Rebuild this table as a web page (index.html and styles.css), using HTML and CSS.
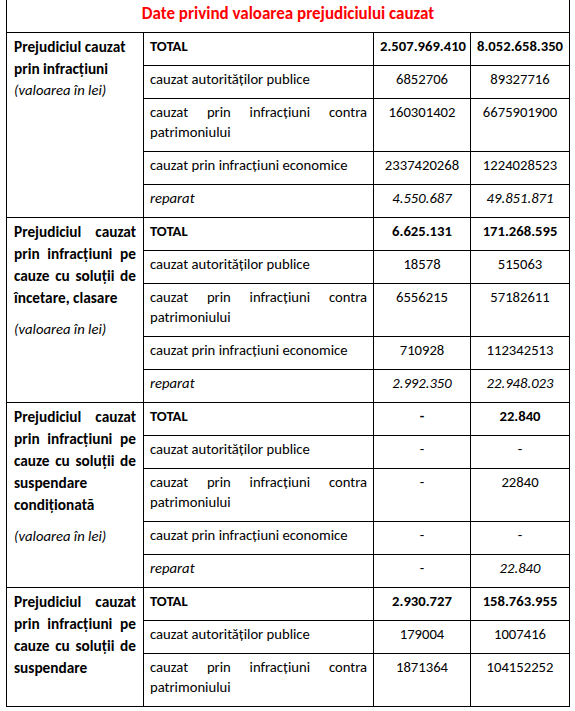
FILE: index.html
```html
<!DOCTYPE html>
<html lang="ro">
<head>
<meta charset="utf-8">
<title>Date privind valoarea prejudiciului cauzat</title>
<link rel="stylesheet" href="styles.css">
</head>
<body>
<table class="tbl">
  <colgroup>
    <col class="c1"><col class="c2"><col class="c3"><col class="c4">
  </colgroup>
  <tr class="title-row">
    <td colspan="4" class="title">Date privind valoarea prejudiciului cauzat</td>
  </tr>

  <tr>
    <td rowspan="5" class="head"><span class="ln">Prejudiciul cauzat</span><span class="ln">prin infracțiuni</span><span class="ln note">(valoarea în lei)</span></td>
    <td class="b">TOTAL</td>
    <td class="num b">2.507.969.410</td>
    <td class="num b">8.052.658.350</td>
  </tr>
  <tr>
    <td>cauzat autorităților publice</td>
    <td class="num">6852706</td>
    <td class="num">89327716</td>
  </tr>
  <tr>
    <td><span class="ln j">cauzat prin infracțiuni contra</span><span class="ln">patrimoniului</span></td>
    <td class="num">160301402</td>
    <td class="num">6675901900</td>
  </tr>
  <tr>
    <td>cauzat prin infracțiuni economice</td>
    <td class="num">2337420268</td>
    <td class="num">1224028523</td>
  </tr>
  <tr>
    <td class="i">reparat</td>
    <td class="num i">4.550.687</td>
    <td class="num i">49.851.871</td>
  </tr>

  <tr>
    <td rowspan="5" class="head"><span class="ln j">Prejudiciul cauzat</span><span class="ln j">prin infracțiuni pe</span><span class="ln j">cauze cu soluţii de</span><span class="ln">încetare, clasare</span><span class="ln note gap">(valoarea în lei)</span></td>
    <td class="b">TOTAL</td>
    <td class="num b">6.625.131</td>
    <td class="num b">171.268.595</td>
  </tr>
  <tr>
    <td>cauzat autorităților publice</td>
    <td class="num">18578</td>
    <td class="num">515063</td>
  </tr>
  <tr>
    <td><span class="ln j">cauzat prin infracțiuni contra</span><span class="ln">patrimoniului</span></td>
    <td class="num">6556215</td>
    <td class="num">57182611</td>
  </tr>
  <tr>
    <td>cauzat prin infracțiuni economice</td>
    <td class="num">710928</td>
    <td class="num">112342513</td>
  </tr>
  <tr>
    <td class="i">reparat</td>
    <td class="num i">2.992.350</td>
    <td class="num i">22.948.023</td>
  </tr>

  <tr>
    <td rowspan="5" class="head"><span class="ln j">Prejudiciul  cauzat</span><span class="ln j">prin infracțiuni pe</span><span class="ln j">cauze cu soluţii de</span><span class="ln">suspendare</span><span class="ln">condiţionată</span><span class="ln note gap">(valoarea în lei)</span></td>
    <td class="b">TOTAL</td>
    <td class="num b">-</td>
    <td class="num b">22.840</td>
  </tr>
  <tr>
    <td>cauzat autorităților publice</td>
    <td class="num">-</td>
    <td class="num">-</td>
  </tr>
  <tr>
    <td><span class="ln j">cauzat prin infracțiuni contra</span><span class="ln">patrimoniului</span></td>
    <td class="num">-</td>
    <td class="num">22840</td>
  </tr>
  <tr>
    <td>cauzat prin infracțiuni economice</td>
    <td class="num">-</td>
    <td class="num">-</td>
  </tr>
  <tr>
    <td class="i">reparat</td>
    <td class="num">-</td>
    <td class="num i">22.840</td>
  </tr>

  <tr>
    <td rowspan="3" class="head"><span class="ln j">Prejudiciul cauzat</span><span class="ln j">prin infracțiuni pe</span><span class="ln j">cauze cu soluţii de</span><span class="ln">suspendare</span></td>
    <td class="b">TOTAL</td>
    <td class="num b">2.930.727</td>
    <td class="num b">158.763.955</td>
  </tr>
  <tr>
    <td>cauzat autorităților publice</td>
    <td class="num">179004</td>
    <td class="num">1007416</td>
  </tr>
  <tr>
    <td><span class="ln j">cauzat prin infracțiuni contra</span><span class="ln">patrimoniului</span></td>
    <td class="num">1871364</td>
    <td class="num">104152252</td>
  </tr>
</table>
</body>
</html>
```

FILE: styles.css
```css
html, body {
  margin: 0;
  padding: 0;
  background: #ffffff;
}

body {
  font-family: Carlito, Lato, "Liberation Sans", sans-serif;
  color: #000000;
}

.tbl {
  border-collapse: collapse;
  table-layout: fixed;
  width: 563px;
  margin-left: 6px;
}

.c1 { width: 137px; }
.c2 { width: 230px; }
.c3 { width: 97px; }
.c4 { width: 99px; }

.tbl td {
  border: 1px solid #000000;
  vertical-align: top;
  padding: 3px 6px 9px 6px;
  font-size: 14.67px;
  line-height: 20px;
  text-align: left;
}

.tbl .title {
  border-top: none;
  color: #ff0000;
  font-weight: bold;
  font-size: 17px;
  text-align: center;
  padding: 3px 6px 8px;
  line-height: 21px;
}

.tbl .head {
  font-weight: bold;
  font-size: 15.3px;
  line-height: 22px;
  padding: 3px 7px 6px 7px;
}

.ln {
  display: block;
  white-space: pre;
}

.j {
  text-align: justify;
  text-align-last: justify;
  white-space: normal;
}

.head .note {
  font-weight: normal;
  font-style: italic;
  font-size: 14.67px;
  line-height: 20px;
}

.head .gap {
  margin-top: 10px;
}

.tbl .num {
  text-align: center;
}

.b {
  font-weight: bold;
}

.i {
  font-style: italic;
}
```
